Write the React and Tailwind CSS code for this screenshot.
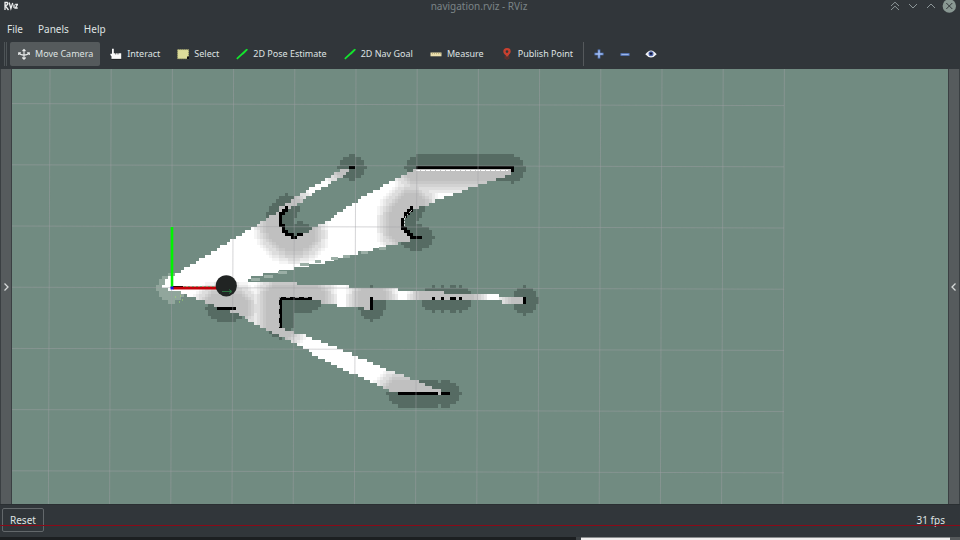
import React from "react";

const CELL = 3.06;
const OX = 171.5;
const OY = 288.2;

const FREE = [
  [[162, 288], [168, 277], [180, 271], [216, 250], [253, 227], [264, 221], [280, 209], [281, 226], [288, 235], [300, 236], [327, 221], [343, 209], [380, 188], [407, 173], [417, 169], [512, 169], [511, 174], [483, 184], [443, 198], [422, 206], [413, 209], [404, 218], [404, 228], [412, 240], [403, 243], [350, 255], [320, 263], [260, 275], [247, 279], [250, 282], [297, 282], [298, 284], [348, 285], [349, 288], [397, 288], [398, 291], [450, 293], [452, 295], [498, 295], [500, 298], [523, 298], [523, 303], [502, 303], [500, 300], [373, 301], [371, 310], [360, 307], [343, 306], [322, 302], [320, 299], [280, 299], [280, 328], [303, 335], [327, 344], [352, 354], [367, 360], [388, 370], [413, 379], [443, 392], [443, 394], [397, 394], [380, 387], [360, 377], [327, 361], [293, 343], [260, 327], [240, 315], [200, 300], [180, 293]],
  [[275, 213], [281, 206], [310, 189], [344, 168], [352, 167], [350, 171], [328, 185], [290, 208]],
];

const WALLS = [
  [[286, 208], [281, 213], [281, 223], [283, 230], [288, 235], [296, 237], [302, 234]],
  [[413, 208], [408, 212], [404, 218], [404, 227], [407, 232], [411, 236], [421, 237]],
  [[349, 168], [354, 168]],
  [[418, 167], [512, 167], [513, 170]],
  [[280, 298], [311, 298]],
  [[280, 298], [280, 326]],
  [[371, 299], [371, 308]],
  [[433, 299], [434, 299]],
  [[442, 299], [443, 299]],
  [[451, 299], [454, 299]],
  [[460, 299], [461, 299]],
  [[525, 298], [525, 302]],
  [[219, 309], [234, 309]],
  [[399, 394], [436, 394]],
  [[442, 394], [448, 394]],
];

// Scattered half-known cells along the lower rim of the scanned wedge.
const FRINGE = [
  [251, 278, 9], [264, 275, 9], [278, 271, 9], [300, 263, 9], [315, 260, 6],
  [331, 257, 7], [343, 255, 7], [361, 251, 7], [379, 247, 7],
];

const SHADES = ["#c0c0c0", "#c8c8c8", "#d2d2d2", "#dddddd", "#e9e9e9", "#f5f5f5"];

function inside(poly, x, y) {
  let hit = false;
  for (let i = 0, j = poly.length - 1; i < poly.length; j = i++) {
    const [xi, yi] = poly[i];
    const [xj, yj] = poly[j];
    if (yi > y !== yj > y && x < ((xj - xi) * (y - yi)) / (yj - yi) + xi) hit = !hit;
  }
  return hit;
}

function wallCells() {
  const seen = new Map();
  for (const line of WALLS) {
    for (let i = 0; i + 1 < line.length; i++) {
      const [ax, ay] = line[i];
      const [bx, by] = line[i + 1];
      const n = Math.ceil(Math.hypot(bx - ax, by - ay));
      for (let k = 0; k <= n; k++) {
        const c = Math.floor((ax + ((bx - ax) * k) / n - OX) / CELL);
        const r = Math.floor((ay + ((by - ay) * k) / n - OY) / CELL);
        seen.set(c + "," + r, [c, r]);
      }
    }
  }
  return seen;
}

function buildCostmap() {
  const walls = wallCells();
  const list = [...walls.values()];
  const runs = [];
  for (let r = -46; r < 42; r++) {
    let run = null;
    for (let c = -6; c < 124; c++) {
      const x = OX + (c + 0.5) * CELL;
      const y = OY + (r + 0.5) * CELL;
      let fill = null;
      if (walls.has(c + "," + r)) fill = "#000000";
      else {
        let d = Infinity;
        for (const [wc, wr] of list) d = Math.min(d, Math.hypot(wc - c, wr - r));
        if (FREE.some((p) => inside(p, x, y))) {
          if (d <= 4.6) fill = SHADES[0];
          else if (d < 9) fill = SHADES[Math.min(5, 1 + Math.floor((d - 4.6) / 0.88))];
          else fill = "#ffffff";
        } else if (d <= 4) fill = "#566b63";
        else if (Math.hypot(c + 0.5, r + 0.5) < 4.6) fill = "#91a69c";
      }
      if (run && run.fill === fill) run.n++;
      else {
        run = { fill, c, r, n: 1 };
        if (fill) runs.push(run);
      }
    }
  }
  return runs;
}

const RUNS = buildCostmap();
const COLUMNS = Array.from({ length: 13 }, (_, i) => 49.8 + i * 61.2);
const ROWS = Array.from({ length: 7 }, (_, i) => 103.6 + i * 61.2);

function MapView() {
  return (
    <svg className="block h-full w-full bg-[#718b81]" viewBox="12 69 936 435" preserveAspectRatio="xMidYMid slice" role="img" aria-label="Map view">
      <g shapeRendering="crispEdges">
        {RUNS.map((q) => (
          <rect key={q.c + "_" + q.r} x={OX + q.c * CELL} y={OY + q.r * CELL} width={q.n * CELL} height={CELL} fill={q.fill} />
        ))}
        {FRINGE.map(([x, y, w]) => (
          <rect key={x} x={x} y={y} width={w} height="3" fill="#9aaea5" />
        ))}
        <path d="M416 170.5h92" stroke="#fff" strokeDasharray="4 1" />
        <path d="M279.500 327V297.500h32" fill="none" stroke="#fff" strokeOpacity=".6" strokeDasharray="4 5" />
        <path d="M404.500 226v-8l7-8" fill="none" stroke="#fff" strokeOpacity=".7" strokeDasharray="2 1" />
      </g>
      <g stroke="#a0a0a4" strokeOpacity=".45">
        {COLUMNS.map((x) => <path key={x} d={`M${x + 0.2} 69L${x - 1.4} 504`} />)}
        {ROWS.map((y) => <path key={y} d={`M12 ${y}L784 ${y + 2}`} />)}
      </g>
      <path d="M172 227v61" stroke="#00f400" strokeWidth="2.600" />
      <path d="M173 288h45" stroke="#c40008" strokeWidth="3" />
      <path d="M173 286.500h10" stroke="#3a0508" />
      <path d="M184 286.500h32" stroke="#7d9a70" strokeDasharray="2 2" />
      <rect x="170.500" y="286.500" width="3" height="3" fill="#1414e6" />
      <circle cx="226.300" cy="285.800" r="10.600" fill="#212423" />
      <path d="M222 291.500h9m-2-2l3 2-3 2" fill="none" stroke="#2b7040" />
      <path d="M175 297h1m4-1h1m1 4h1m-4 2h1" stroke="#a5e06a" />
    </svg>
  );
}

const GreenArrow = () => (
  <svg viewBox="0 0 12 12" className="size-3"><path d="M.8 10.800L11 1.500" stroke="#14e62e" strokeWidth="1.700" /><path d="M6.500 6.300L11.500 1 8 5.500z" fill="#14e62e" stroke="#14e62e" strokeWidth=".6" /></svg>
);

const ICONS = {
  move: (
    <svg viewBox="0 0 12 12" className="size-3" fill="none" stroke="#e8eaea" strokeWidth="1.100">
      <path d="M6 1.500v9.500M4.500 3L6 1.500 7.500 3M4.300 9.500L6 11.200l1.700-1.700M1 5c1.500 2.800 8.500 2.800 10 0M.7 7V4.700h2.200M11.300 7V4.700H9.100" />
    </svg>
  ),
  interact: (
    <svg viewBox="0 0 12 12" className="size-3"><path d="M2 .8h1.800v4.400h7.400v5.800H1.500V8.200L.4 7V5.800H2z" fill="#fafafa" /><path d="M5.700 5v1.500M8 5v1.500M1.500 11.300h10" stroke="#111" strokeWidth=".6" /></svg>
  ),
  select: (
    <svg viewBox="0 0 12 12" className="size-3"><rect x=".7" y="1.700" width="10.800" height="9" fill="#dcdc9a" stroke="#bfbf7c" strokeDasharray="1 1" /><path d="M10 8.500h2V11h-2z" fill="#111" /></svg>
  ),
  arrow: <GreenArrow />,
  measure: (
    <svg viewBox="0 0 12 12" className="size-3"><path d="M.5 4.500h11v3.800H.5z" fill="#ece0ae" /><path d="M2.500 4.500v1.700M4.500 4.500v1.700M6.500 4.500v1.700M8.500 4.500v1.700M10.300 4.500v1.700" stroke="#9c9162" strokeWidth=".6" /></svg>
  ),
  pin: (
    <svg viewBox="0 0 12 12" className="size-3"><path d="M6 9.500C5.600 7.500 2.300 6.300 2.300 3.600a3.700 3.600 0 0 1 7.400 0C9.700 6.300 6.400 7.500 6 9.500z" fill="#c9402f" /><circle cx="6" cy="3.600" r="1.300" fill="#31363a" /><path d="M4.200 8v3M7.800 8v3M6 8.500v3.500" stroke="#7c2d24" strokeWidth=".9" /></svg>
  ),
};

const TOOLS = [
  ["Move Camera", "move"],
  ["Interact", "interact"],
  ["Select", "select"],
  ["2D Pose Estimate", "arrow"],
  ["2D Nav Goal", "arrow"],
  ["Measure", "measure"],
  ["Publish Point", "pin"],
];

function TitleBar() {
  return (
    <header className="relative flex h-[18px] items-start justify-between pr-1 pl-1">
      <svg viewBox="0 0 14 10" className="mt-px h-[10px] w-[14px]" fill="none" stroke="#eceeee" strokeWidth="1.300">
        <path d="M1 9V1.500h2.200q1.800 2-2 3.200L4.500 9M5.200 1.500l1.700 6L8.700 2M10 3.500V7M11.200 3.500h2.300L11.300 7h2.400" />
      </svg>
      <h1 className="absolute inset-x-0 top-0 pr-[2px] text-center text-[10px] leading-[13px] text-[#7b8487]">navigation.rviz - RViz</h1>
      <div className="relative flex items-start gap-[6px]">
        <button aria-label="Keep above" className="flex size-3"><svg viewBox="0 0 12 12" fill="none" stroke="#8c9698"><path d="M3 6l4-3.800L11 6M3 10l4-3.800 4 3.800" /></svg></button>
        <button aria-label="Minimize" className="flex size-3"><svg viewBox="0 0 12 12" fill="none" stroke="#8c9698"><path d="M3 4l4 4 4-4" /></svg></button>
        <button aria-label="Maximize" className="flex size-3"><svg viewBox="0 0 12 12" fill="none" stroke="#8c9698"><path d="M3 8l4-4 4 4" /></svg></button>
        <button aria-label="Close" className="flex size-[14px]"><svg viewBox="0 0 14 14"><circle cx="7.300" cy="6" r="6.700" fill="#899893" /><path d="M4.300 3l6 6M10.300 3l-6 6" stroke="#31363a" /></svg></button>
      </div>
    </header>
  );
}

function ToolBar() {
  return (
    <div role="toolbar" aria-label="Tools" className="flex h-[30px] items-center gap-[2px] pl-1 text-[9px]">
      <span className="mr-px h-6 w-[3px] border-x border-[#4e5457]" />
      {TOOLS.map(([label, icon], i) => (
        <button key={label} className={"flex h-6 items-center gap-[5px] rounded-[2px] pr-[7px] pl-2 whitespace-nowrap " + (i === 0 ? "bg-[#555a5c]" : "")}>
          {ICONS[icon]}
          {label}
        </button>
      ))}
      <span className="ml-px h-6 w-px bg-[#55595c]" />
      <div className="ml-[5px] flex gap-[10px]">
        <button aria-label="Add tool" className="size-4 p-[2px]"><svg viewBox="0 0 12 12" className="size-3"><path d="M6 1.500v9M1.500 6h9" stroke="#5d82cc" strokeWidth="2.600" /><path d="M6 2.500v7M2.500 6h7" stroke="#b6cbf2" /></svg></button>
        <button aria-label="Remove tool" className="size-4 p-[2px]"><svg viewBox="0 0 12 12" className="size-3"><path d="M1.500 6.500h9" stroke="#5d82cc" strokeWidth="2.600" /><path d="M2.500 6.500h7" stroke="#9bb5e8" /></svg></button>
        <button aria-label="Tool visibility" className="size-4 p-[2px]"><svg viewBox="0 0 12 12" className="size-3"><path d="M.3 6.300q5.700-7.600 11.400 0-5.700 6.600-11.400 0z" fill="#eef0f4" /><circle cx="6" cy="5.800" r="2.500" fill="#4b62a8" /><circle cx="6" cy="5.600" r="1.200" fill="#10142c" /></svg></button>
      </div>
    </div>
  );
}

export default function App() {
  return (
    <div className="flex h-screen flex-col overflow-hidden bg-[#31363a] font-['Noto_Sans',sans-serif] text-[10px] leading-[14px] text-[#dfe2e2]">
      <TitleBar />
      <nav aria-label="Menu" className="flex h-[21px] items-center gap-[15px] px-[7px]">
        <button>File</button>
        <button>Panels</button>
        <button>Help</button>
      </nav>
      <ToolBar />
      <main className="flex min-h-0 flex-1">
        <button aria-label="Show left panel" className="flex w-3 items-center justify-center border-x border-[#3a3f42] bg-[#565b5d]">
          <svg viewBox="0 0 8 10" className="h-[10px] w-2" fill="none" stroke="#d6d9d9" strokeWidth="1.300"><path d="M2.500 1.500L6 5 2.500 8.500" /></svg>
        </button>
        <div className="min-w-0 flex-1"><MapView /></div>
        <button aria-label="Show right panel" className="flex w-3 items-center justify-center border-x border-[#3a3f42] bg-[#565b5d]">
          <svg viewBox="0 0 8 10" className="h-[10px] w-2" fill="none" stroke="#d6d9d9" strokeWidth="1.300"><path d="M5.500 1.500L2 5l3.500 3.500" /></svg>
        </button>
      </main>
      <footer className="relative flex h-[33px] items-center justify-between border-t border-[#2a2f32] pr-[15px] pb-[2px] pl-[2px]">
        <button className="h-6 rounded-[2px] border border-[#63686b] px-[7px]">Reset</button>
        <output>31 fps</output>
        <span className="absolute inset-x-0 top-5 h-px bg-[#8a0a18]" />
      </footer>
      <div className="flex h-[3px] bg-[#1c1f21]">
        <span className="w-3/5" />
        <span className="w-[5px] bg-[#3c4144]" />
        <span className="flex-1 border-t border-[#8a8d8e] bg-[#f0eeee]" />
        <span className="w-[10px] bg-[#55595b]" />
      </div>
    </div>
  );
}
